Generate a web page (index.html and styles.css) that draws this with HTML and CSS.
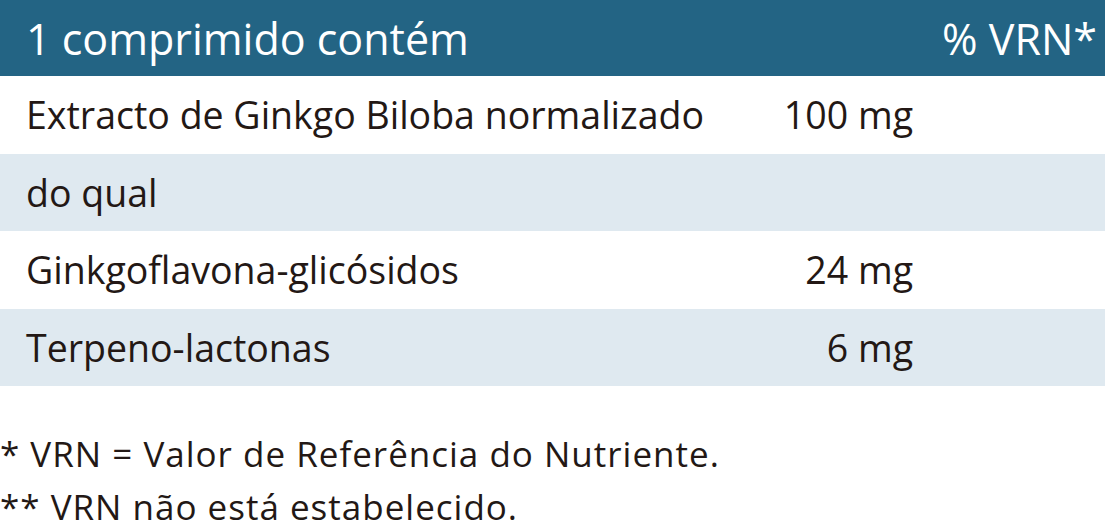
FILE: index.html
```html
<!DOCTYPE html>
<html lang="pt">
<head>
<meta charset="utf-8">
<link rel="stylesheet" href="styles.css">
</head>
<body>
<div class="table">
  <div class="head">
    <span class="name">1 comprimido contém</span>
    <span class="vrn">% VRN*</span>
  </div>
  <div class="row">
    <span class="name">Extracto de Ginkgo Biloba normalizado</span>
    <span class="qty">100 mg</span>
  </div>
  <div class="row alt">
    <span class="name">do qual</span>
    <span class="qty"></span>
  </div>
  <div class="row">
    <span class="name">Ginkgoflavona-glicósidos</span>
    <span class="qty">24 mg</span>
  </div>
  <div class="row alt">
    <span class="name">Terpeno-lactonas</span>
    <span class="qty">6 mg</span>
  </div>
</div>
<div class="notes">
  <p>* VRN = Valor de Referência do Nutriente.</p>
  <p>** VRN não está estabelecido.</p>
</div>
</body>
</html>
```

FILE: styles.css
```css
html, body {
  margin: 0;
  padding: 0;
  background: #ffffff;
}
body {
  font-family: "Open Sans", "Noto Sans", sans-serif;
  color: #231815;
  width: 1105px;
  overflow: hidden;
}
.table {
  display: flex;
  flex-direction: column;
}
.head {
  height: 76px;
  background: #236484;
  color: #ffffff;
  display: flex;
  align-items: center;
  justify-content: space-between;
  padding: 0 8px 0 26px;
  font-size: 43px;
  box-sizing: border-box;
}
.row {
  height: 77.5px;
  display: flex;
  align-items: center;
  padding-left: 26px;
  font-size: 37.5px;
  box-sizing: border-box;
}
.row.alt {
  background: #dfe9f0;
}
.row .name {
  flex: 1;
  white-space: nowrap;
}
.row .qty {
  text-align: right;
  margin-right: 192px;
  white-space: nowrap;
}
.notes {
  padding-top: 41px;
  font-size: 35px;
  letter-spacing: 1px;
}
.notes p {
  margin: 0;
  line-height: 53px;
  white-space: nowrap;
}
```
